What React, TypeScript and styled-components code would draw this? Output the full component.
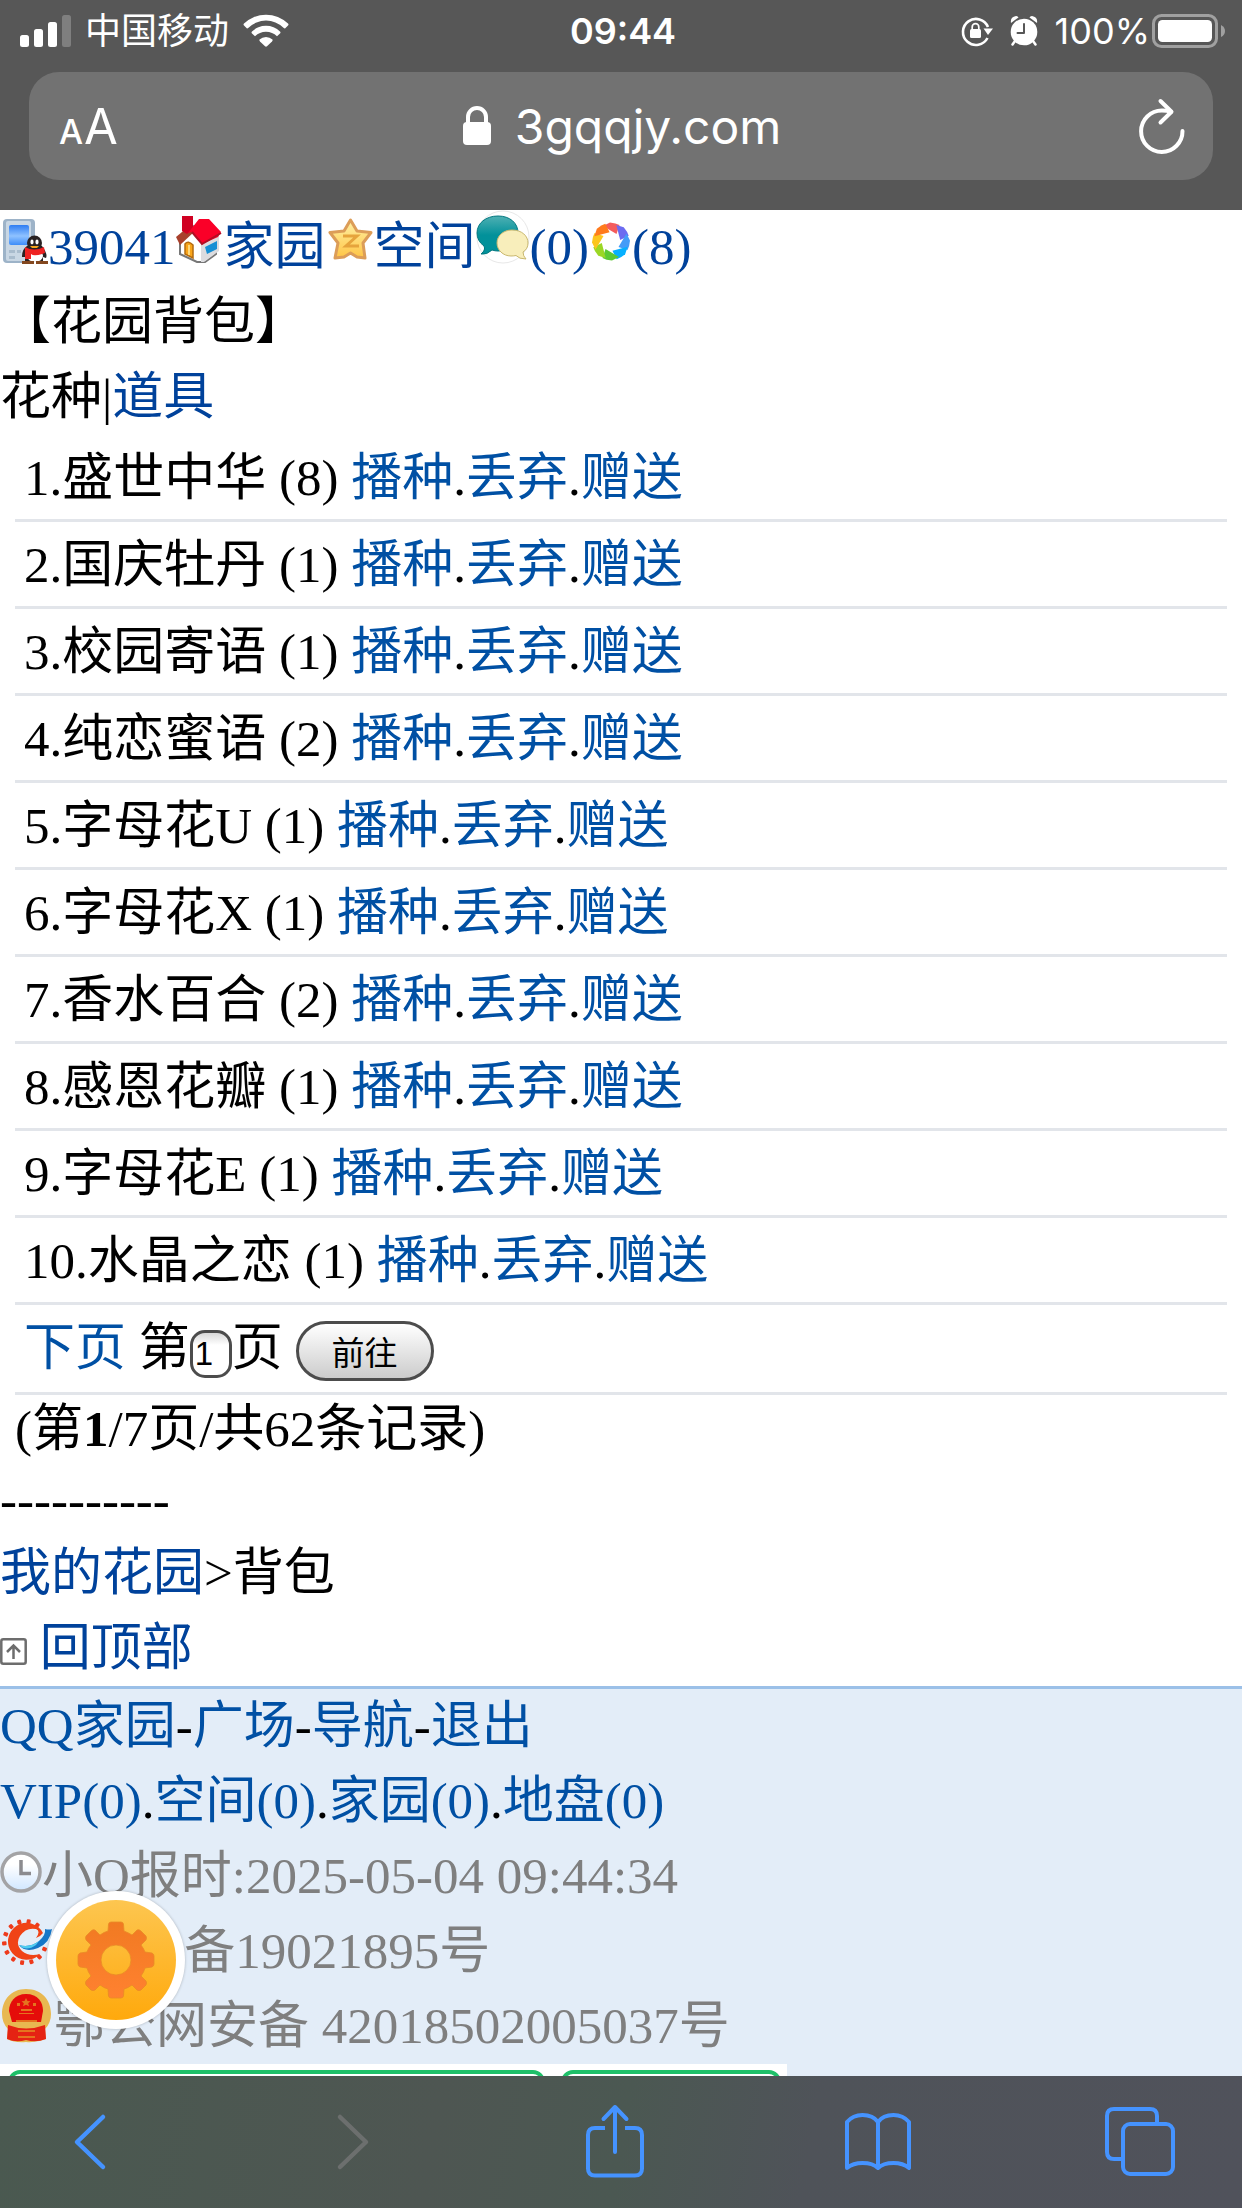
import React, { useState } from "react";
import styled, { createGlobalStyle } from "styled-components";

const GlobalStyle = createGlobalStyle`
  * { box-sizing: border-box; }
  html, body { margin: 0; background: #ffffff; }
  body {
    font-family: "Liberation Serif", "Noto Sans CJK SC", serif;
    font-size: 51px;
    line-height: 75px;
    color: #000000;
  }
  ul { list-style: none; margin: 0; padding: 0; }
  button { margin: 0; font: inherit; color: inherit; cursor: pointer; }
`;

const sans = `Inter, "Noto Sans CJK SC", sans-serif`;

const Screen = styled.div`
  display: flex;
  flex-direction: column;
  height: 100vh;
  overflow: hidden;
`;

/* ---------- browser chrome ---------- */

const TopChrome = styled.header`
  flex: none;
  padding: 0 29px 30px;
  background: #575757;
  color: #ffffff;
  font-family: ${sans};
`;

const StatusBar = styled.div`
  display: grid;
  grid-template-columns: 1fr auto 1fr;
  align-items: center;
  height: 72px;
  margin: 0 -13px 0 -9px;
  padding-bottom: 11px;
  font-size: 36px;
  line-height: 42px;
`;

const StatusGroup = styled.div<{ $end?: boolean; $gap: number }>`
  display: flex;
  align-items: center;
  justify-content: ${(p) => (p.$end ? "flex-end" : "flex-start")};
  gap: ${(p) => p.$gap}px;
`;

const Clock = styled.time`
  font-weight: 600;
`;

const BatteryGroup = styled.span`
  display: flex;
  align-items: center;
  gap: 2px;
`;

const AddressBar = styled.div`
  display: grid;
  grid-template-columns: 1fr auto 1fr;
  align-items: center;
  height: 108px;
  padding: 0 28px 0 30px;
  border-radius: 30px;
  background: #727272;
`;

const ChromeButton = styled.button<{ $end?: boolean }>`
  display: flex;
  align-items: center;
  justify-self: ${(p) => (p.$end ? "end" : "start")};
  gap: 24px;
  padding: 0;
  border: 0;
  background: none;
  line-height: 60px;
`;

const TextSize = styled.span`
  display: flex;
  align-items: baseline;
  gap: 1px;
  padding-top: 6px;
  font-size: 49px;
  font-weight: 400;
`;

const SmallLetter = styled.span`
  font-size: 34px;
  font-weight: 500;
`;

const Address = styled.span`
  padding-top: 2px;
  font-size: 48px;
`;

const Toolbar = styled.nav`
  flex: none;
  display: flex;
  justify-content: space-between;
  align-items: center;
  height: 132px;
  padding: 0 52px 0 40px;
  background: linear-gradient(100deg, #4a5950 0%, #4e5652 35%, #4b5852 50%, #4f5359 65%, #50525b 100%);
`;

const ToolButton = styled.button`
  display: flex;
  justify-content: center;
  width: 100px;
  padding: 0;
  border: 0;
  background: none;
  color: #4593ff;
  &:disabled { color: #6c6f6e; cursor: default; }
`;

/* ---------- page ---------- */

const Page = styled.main`
  flex: 1;
  min-height: 0;
  display: flex;
  flex-direction: column;
  overflow: hidden;
`;

const Line = styled.div`
  white-space: nowrap;
`;

const Title = styled.h1`
  margin: 0;
  font-size: 51px;
  font-weight: 400;
`;

const Link = styled.a<{ $deep?: boolean }>`
  color: ${(p) => (p.$deep ? "#00429b" : "#0050a4")};
  text-decoration: none;
`;

const Seeds = styled.ul`
  margin: 0 15px;
`;

const Row = styled.li`
  padding: 3px 9px 0;
  border-bottom: 3px solid #e2e5ea;
  line-height: 81px;
  white-space: nowrap;
`;

const Pager = styled.form`
  margin: 0 15px;
  padding: 3px 9px;
  border-bottom: 3px solid #e2e5ea;
  line-height: 81px;
  white-space: nowrap;
`;

const PageField = styled.input`
  width: 42px;
  height: 48px;
  padding: 0 2px;
  border: 3px solid #4c4c4c;
  border-radius: 15px;
  background: linear-gradient(#d8d8d8, #ffffff 12px);
  color: #000000;
  font: 33px "Liberation Sans", "Noto Sans CJK SC", sans-serif;
`;

const GoButton = styled.button`
  height: 60px;
  padding: 0 33px;
  border: 3px solid #4c4c4c;
  border-radius: 30px;
  background: linear-gradient(#ffffff, #cccccc);
  font: 33px "Liberation Sans", "Noto Sans CJK SC", sans-serif;
`;

const Summary = styled.p`
  margin: 0 15px;
  line-height: 69px;
`;

const Dashes = styled.div`
  line-height: 72px;
`;

const Footer = styled.footer`
  flex: 1;
  border-top: 3px solid #9bc0e8;
  background: #e3edf8;
`;

const Muted = styled(Line)`
  color: #7f7f7f;
`;

const Badges = styled.div`
  display: flex;
  gap: 16px;
  width: 787px;
  max-width: 100%;
  padding: 6px 6px 0 8px;
  background: #ffffff;
`;

const Badge = styled.div<{ $grow: number }>`
  flex: ${(p) => p.$grow} 1 0;
  height: 75px;
  border: 4px solid #1fc069;
  border-radius: 12px;
`;

const SettingsButton = styled.button`
  position: fixed;
  left: 47px;
  bottom: 179px;
  width: 138px;
  height: 138px;
  padding: 9px;
  border: 0;
  border-radius: 50%;
  background: #ffffff;
  box-shadow: 0 0 3px rgba(0, 0, 0, 0.25);
`;

const Glyph = styled.svg`
  flex: none;
  overflow: visible;
`;

/* ---------- chrome icons ---------- */

const SignalIcon = () => (
  <Glyph width="51" height="32" viewBox="0 0 51 32" fill="#fff">
    <rect x="0" y="20" width="9" height="12" rx="2.5" />
    <rect x="14" y="14" width="9" height="18" rx="2.5" />
    <rect x="28" y="7" width="9" height="25" rx="2.5" />
    <rect x="42" y="0" width="9" height="32" rx="2.5" fill="#7f7f7f" />
  </Glyph>
);

const WifiIcon = () => (
  <Glyph width="46" height="33" viewBox="0 0 46 33" fill="#fff">
    <path d="M1 9.600 A31.500 31.500 0 0 1 45 9.600 Q46 10.600 45 11.500 L42 14.500 Q41 14.200 40.500 13.700 A25 25 0 0 0 5.500 13.700 Q5 14.200 4 14.500 L1 11.500 Q0 10.600 1 9.600Z" />
    <path d="M9 17.500 A20 20 0 0 1 37 17.500 Q38 18.500 37 19.500 L34 22.300 A15.500 15.500 0 0 0 12 22.300 L9 19.500 Q8 18.500 9 17.500Z" />
    <path d="M16.500 25.500 A9.500 9.500 0 0 1 29.500 25.500 Q30 26.500 29 27.500 L24 32.300 Q23 33.200 22 32.300 L17 27.500 Q16 26.500 16.500 25.500Z" />
  </Glyph>
);

const RotationLockIcon = () => (
  <Glyph width="32" height="30" viewBox="0 0 32 30" fill="none">
    <path d="M26.500 22 A13 13 0 1 1 27 11" stroke="#fff" strokeWidth="2.600" />
    <path d="M22.500 12.500 H32 L27 19Z" fill="#fff" />
    <rect x="9" y="13" width="11" height="9" rx="1.500" fill="#fff" />
    <path d="M11.200 14 V11 A3.300 3.300 0 0 1 17.800 11 V14" stroke="#fff" strokeWidth="1.700" />
  </Glyph>
);

const AlarmIcon = () => (
  <Glyph width="28" height="30" viewBox="0 0 28 30" fill="none">
    <circle cx="14" cy="16" r="13.300" fill="#fff" />
    <path d="M1 7 Q0 1 6 0 Q8 .3 8.500 1.500Z M27 7 Q28 1 22 0 Q20 .3 19.500 1.500Z" fill="#fff" />
    <path d="M5 25 L2.500 28.500 M23 25 L25.500 28.500" stroke="#fff" strokeWidth="2.500" strokeLinecap="round" />
    <path d="M14 8 V17 H7.500" stroke="#575757" strokeWidth="2" strokeLinecap="round" strokeLinejoin="round" />
  </Glyph>
);

const BatteryIcon = () => (
  <Glyph width="74" height="34" viewBox="0 0 74 34" fill="none">
    <rect x="1.500" y="1.500" width="63" height="31" rx="8" stroke="#a0a0a0" strokeWidth="3" />
    <rect x="6" y="6" width="54" height="22" rx="4.500" fill="#fff" />
    <path d="M69 11 Q73 13 73 17 Q73 21 69 23Z" fill="#a0a0a0" />
  </Glyph>
);

const LockIcon = () => (
  <Glyph width="28" height="40" viewBox="0 0 28 40" fill="none">
    <rect x="0" y="16" width="28" height="23" rx="4" fill="#fff" />
    <path d="M5 18 V11 A9 9 0 0 1 23 11 V18" stroke="#fff" strokeWidth="4" />
  </Glyph>
);

const ReloadIcon = () => (
  <Glyph width="46" height="55" viewBox="0 0 46 55" fill="none" stroke="#fff" strokeWidth="4" strokeLinecap="round" strokeLinejoin="round">
    <path d="M43.500 32 A20.700 20.700 0 1 1 23 11.500 Q28 11.500 32 12.800" />
    <path d="M21.500 2 L32.500 12.800 L21.500 23.500" />
  </Glyph>
);

const line = { fill: "none", stroke: "currentColor", strokeWidth: 4, strokeLinecap: "round", strokeLinejoin: "round" } as const;

const BackIcon = () => (
  <Glyph width="32" height="56" viewBox="0 0 32 56" {...line} strokeWidth="4.500"><path d="M29 3 L3 28 L29 53" /></Glyph>
);
const ForwardIcon = () => (
  <Glyph width="32" height="56" viewBox="0 0 32 56" {...line} strokeWidth="4.500"><path d="M3 3 L29 28 L3 53" /></Glyph>
);
const ShareIcon = () => (
  <Glyph width="58" height="74" viewBox="0 0 58 74" {...line}>
    <path d="M19 23 H9 Q2 23 2 30 V63.500 Q2 70.500 9 70.500 H49 Q56 70.500 56 63.500 V30 Q56 23 49 23 H39" strokeLinecap="butt" />
    <path d="M29 47 V2 M17.500 14 L29 2 L40.500 14" />
  </Glyph>
);
const BookIcon = () => (
  <Glyph width="66" height="58" viewBox="0 0 66 58" {...line}>
    <path d="M33 9 V55 M33 9 Q28 2 17.500 2 Q8 2 2 9 V55 Q8 50 17.500 50 Q28 50 33 55 Q38 50 48.500 50 Q58 50 64 55 V9 Q58 2 48.500 2 Q38 2 33 9Z" />
  </Glyph>
);
const TabsIcon = () => (
  <Glyph width="70" height="70" viewBox="0 0 70 70" {...line} strokeLinecap="butt">
    <path d="M17 52 H9 Q2 52 2 45 V9 Q2 2 9 2 H45 Q52 2 52 9 V17" />
    <rect x="18" y="17" width="50" height="50" rx="7" />
  </Glyph>
);

/* ---------- page icons ---------- */

const PhoneIcon = () => (
  <Glyph width="48" height="48" viewBox="0 0 48 48">
    <defs>
      <linearGradient id="scr" x1="0" y1="0" x2="0" y2="1"><stop offset="0" stopColor="#2f7df2" /><stop offset=".55" stopColor="#8fc2ff" /><stop offset="1" stopColor="#3d8cf8" /></linearGradient>
    </defs>
    <rect x="3" y="3" width="32" height="44" rx="4" fill="#9db3c8" />
    <rect x="6" y="5" width="25" height="40" rx="2" fill="#c9d7e4" />
    <rect x="9" y="9" width="20" height="20" rx="2" fill="url(#scr)" />
    <path d="M9 34h6v3H9z M17 34h4v3h-4z M9 40h6v3H9z" fill="#a9bccd" />
    <path d="M22 41 Q22 33 27 30 L42 30 Q48 38 46 42 L43 41 V46 H25 V41Z" fill="#2b2222" />
    <ellipse cx="35" cy="40" rx="8" ry="6" fill="#fff" />
    <circle cx="34.500" cy="27" r="7.500" fill="#292222" />
    <ellipse cx="32" cy="26" rx="1.600" ry="2.400" fill="#fff" /><ellipse cx="37" cy="26" rx="1.600" ry="2.400" fill="#fff" />
    <path d="M30 30h9l-2 2h-5z" fill="#f5a51c" />
    <path d="M25 31 Q34 36 44 31 L45 37 Q34 41 31 38 V43 H25 V36Z" fill="#ef2222" />
    <path d="M22 45h12v3H22z M36 45h12v3H36z" fill="#84481f" />
  </Glyph>
);

const HouseIcon = () => (
  <Glyph width="48" height="48" viewBox="0 0 48 48">
    <path d="M4 24 L18 10 L25 16 L40 25 V38 L29 46 H21 L4 38Z" fill="#fff" stroke="#777" strokeWidth="2" />
    <path d="M25 28 L43 20 V35 L28 46 H25Z" fill="#dcdcdf" />
    <path d="M29 31 L41 25 V33 L31 38Z" fill="#168fd4" />
    <path d="M9 28 Q12 24 17 29 V42 L9 38Z" fill="#f8a51b" stroke="#b46b0e" strokeWidth="1.500" />
    <path d="M13 29V39" stroke="#ffd878" strokeWidth="2" />
    <path d="M0 21 L12 11 L18 16 L4 29Z" fill="#a8402c" />
    <path d="M6 0 H17 V13 L11 18 L6 15Z" fill="#d00022" />
    <path d="M12 17 L23 3 H33 L45 16 L42 21 L26 28 L16 16Z" fill="#fa0028" />
    <path d="M16 16 L26 28 L45 17" fill="none" stroke="#b00d24" strokeWidth="2" />
  </Glyph>
);

const StarIcon = () => (
  <Glyph width="48" height="48" viewBox="0 0 48 48">
    <defs><linearGradient id="star" x1="0" y1="0" x2="0" y2="1"><stop offset="0" stopColor="#fff1a6" /><stop offset="1" stopColor="#ffc545" /></linearGradient></defs>
    <path d="M24.500 4 L31 15 L45 16.500 L37 27 L39 42 L31 41 L24.500 37 L18 41 L9 42 L12 27 L4 16.500 L18 15Z" fill="url(#star)" stroke="#dc9d58" strokeWidth="3" strokeLinejoin="round" />
    <path d="M17 20H31L20 30H33" fill="none" stroke="#e6a43c" strokeWidth="3" />
  </Glyph>
);

const ChatIcon = () => (
  <Glyph width="54" height="54" viewBox="0 0 54 54">
    <defs><linearGradient id="teal" x1="0" y1="0" x2="0" y2="1"><stop offset="0" stopColor="#4fb0b3" /><stop offset=".5" stopColor="#02919a" /><stop offset="1" stopColor="#01919a" /></linearGradient></defs>
    <circle cx="27" cy="27" r="26" fill="#fff" stroke="#e8e8e8" />
    <path d="M22 6 C34 6 42 13 42 23 C42 34 34 41 22 41 Q19 41 16 40 Q11 45 5 44 Q10 40 8 36 Q1 31 1 23 C1 13 10 6 22 6Z" fill="url(#teal)" stroke="#02777f" strokeWidth="1" />
    <path d="M36 20 C46 20 52 26 52 33 Q52 39 47 42 Q47 46 50 49 Q43 49 40 45.500 Q38 46 35 46 C27 46 21 40 21 33 C21 26 27 20 36 20Z" fill="#f8eebb" stroke="#c9b86f" strokeWidth="1" />
  </Glyph>
);

const petals = ["#f45c5c", "#6c6bf0", "#449cf7", "#06b0ff", "#5bc934", "#9bd725", "#fcc51d", "#ff7a1c"];
const PinwheelIcon = () => (
  <Glyph width="43" height="45" viewBox="0 0 43 45">
    <g transform="translate(22 22.500)">
      {petals.map((c, i) => (
        <path key={c} d="M-8 -15.500 L-1 -19 Q5 -18.500 8.500 -16.500 L5.500 -7.500Z" fill={c} transform={`rotate(${i * 45})`} />
      ))}
    </g>
  </Glyph>
);

const TopIcon = () => (
  <Glyph width="27" height="27" viewBox="0 0 27 27" fill="none" stroke="#6d6d6d" strokeWidth="2.500">
    <rect x="1.300" y="1.300" width="24.400" height="24.400" rx="2" />
    <path d="M13.500 21V8 M7 14L13.500 7.500L20 14" />
  </Glyph>
);

const ClockIcon = () => (
  <Glyph width="42" height="42" viewBox="0 0 42 42">
    <defs><linearGradient id="face" x1="0" y1="0" x2="0" y2="1"><stop offset=".3" stopColor="#fff" /><stop offset="1" stopColor="#cfe6ff" /></linearGradient></defs>
    <circle cx="21" cy="21" r="19" fill="url(#face)" stroke="#a3a3a5" strokeWidth="3.500" />
    <path d="M21 9V22.500H31" fill="none" stroke="#8b8b8f" strokeWidth="3.500" />
  </Glyph>
);

const teeth = Array.from({ length: 12 }, (_, i) => 20 + i * 26);
const IcpIcon = () => (
  <Glyph width="54" height="54" viewBox="0 0 54 54">
    <g transform="translate(25 28)">
      {teeth.map((a) => (
        <rect key={a} x="18.500" y="-2" width="4.500" height="4" rx="1" fill="#ee3a1c" transform={`rotate(${a})`} />
      ))}
    </g>
    <path d="M43 19 A18.500 18.500 0 1 0 40 40 Q29 43 22 37 Q15 30 20 22 Q26 13 36 15 Q41 17 36 24 Q41 22 43 19Z" fill="#f04316" />
    <path d="M19 31 Q30 34 39 27 Q46 21 45 15 Q49 16 52 15 Q50 29 38 34 Q25 39 19 31Z" fill="#1577c8" />
    <path d="M19 31 Q30 34 39 27 L36 31 Q26 38 19 31Z" fill="#4fcdf0" />
  </Glyph>
);

const EmblemIcon = () => (
  <Glyph width="54" height="54" viewBox="0 0 54 54">
    <path d="M26 0 C42 0 51 11 51 25 Q51 34 45 40 L46 50 Q36 54 26 53 Q15 54 7 50 L8 40 Q2 34 2 25 C2 11 11 0 26 0Z" fill="#e8b850" />
    <path d="M26 5 C38 5 43 13 43 22 L41 33 H12 L9 22 C9 13 15 5 26 5Z" fill="#e50d0a" />
    <path d="M8 36 Q26 43 45 36 L46 50 Q36 54 26 51 Q16 54 7 50Z" fill="#e52313" />
    <path d="M26 9l1.500 3 3 .3-2.300 2 .8 3-3-1.600-3 1.600.8-3-2.300-2 3-.3z" fill="#e5741f" />
    <path d="M17 14h3v3h-3z M33 14h3v3h-3z M19 24h15v1H19z M21 20h11v2H21z M16 31h21v2H16z M18 41h17v2H18z M18 47h17v2H18z" fill="#e5741f" />
  </Glyph>
);

const GearIcon = () => (
  <Glyph width="120" height="120" viewBox="0 0 120 120">
    <defs>
      <linearGradient id="disc" x1="0" y1="0" x2="0" y2="1"><stop offset="0" stopColor="#fdc650" /><stop offset="1" stopColor="#ffa90c" /></linearGradient>
      <linearGradient id="cog" gradientUnits="userSpaceOnUse" x1="0" y1="-38" x2="0" y2="38"><stop offset="0" stopColor="#f17a22" /><stop offset="1" stopColor="#ff8130" /></linearGradient>
    </defs>
    <circle cx="60" cy="60" r="60" fill="url(#disc)" />
    <g transform="translate(60 60)">
      <path
        fill="url(#cog)"
        fillRule="evenodd"
        stroke="#e98a26"
        strokeWidth=".8"
        d="M-5 -38 H5 Q7 -38 7.500 -36 L8 -29 Q13 -27 16 -25 L21 -30 Q23 -31 25 -29 L30 -24 Q31 -22 30 -20 L25 -15 Q28 -11 29 -8 L36 -7 Q38 -6 38 -4 V4 Q38 6 36 7 L29 8 Q28 12 25 16 L30 21 Q31 23 30 25 L25 30 Q23 31 21 30 L16 25 Q12 28 8 29 L7.500 36 Q7 38 5 38 H-5 Q-7 38 -7.500 36 L-8 29 Q-12 28 -16 25 L-21 30 Q-23 31 -25 30 L-30 25 Q-31 23 -30 21 L-25 16 Q-28 12 -29 8 L-36 7 Q-38 6 -38 4 V-4 Q-38 -6 -36 -7 L-29 -8 Q-28 -12 -25 -15 L-30 -20 Q-31 -22 -30 -24 L-25 -29 Q-23 -31 -21 -30 L-16 -25 Q-12 -28 -8 -29 L-7.500 -36 Q-7 -38 -5 -38Z M0 -15 A15 15 0 1 0 0 15 A15 15 0 1 0 0 -15Z"
      />
    </g>
  </Glyph>
);

/* ---------- data ---------- */

const seeds: [string, number][] = [
  ["盛世中华", 8],
  ["国庆牡丹", 1],
  ["校园寄语", 1],
  ["纯恋蜜语", 2],
  ["字母花U", 1],
  ["字母花X", 1],
  ["香水百合", 2],
  ["感恩花瓣", 1],
  ["字母花E", 1],
  ["水晶之恋", 1],
];

export default function App() {
  const [page, setPage] = useState("1");

  return (
    <Screen>
      <GlobalStyle />
      <TopChrome>
        <StatusBar>
          <StatusGroup $gap={14}>
            <SignalIcon />
            <span>中国移动</span>
            <WifiIcon />
          </StatusGroup>
          <Clock>09:44</Clock>
          <StatusGroup $end $gap={17}>
            <RotationLockIcon />
            <AlarmIcon />
            <BatteryGroup>
              <span>100%</span>
              <BatteryIcon />
            </BatteryGroup>
          </StatusGroup>
        </StatusBar>
        <AddressBar>
          <ChromeButton type="button">
            <TextSize>
              <SmallLetter>A</SmallLetter>A
            </TextSize>
          </ChromeButton>
          <ChromeButton type="button">
            <LockIcon />
            <Address>3gqqjy.com</Address>
          </ChromeButton>
          <ChromeButton type="button" $end aria-label="刷新">
            <ReloadIcon />
          </ChromeButton>
        </AddressBar>
      </TopChrome>

      <Page>
        <Line>
          <Link $deep href="#me"><PhoneIcon />39041</Link>
          <Link $deep href="#home"><HouseIcon />家园</Link>
          <Link $deep href="#space"><StarIcon />空间</Link>
          <Link $deep href="#chat"><ChatIcon />(0)</Link>
          <Link $deep href="#news"><PinwheelIcon />(8)</Link>
        </Line>
        <Title>【花园背包】</Title>
        <Line>
          花种|<Link $deep href="#props">道具</Link>
        </Line>

        <Seeds>
          {seeds.map(([name, count], i) => (
            <Row key={name}>
              {i + 1}.{name} ({count}) <Link href="#sow">播种</Link>.<Link href="#drop">丢弃</Link>.<Link href="#give">赠送</Link>
            </Row>
          ))}
        </Seeds>

        <Pager onSubmit={(e) => e.preventDefault()}>
          <Link href="#next">下页</Link> <label htmlFor="page">第</label>
          <PageField id="page" value={page} onChange={(e) => setPage(e.target.value)} />页{" "}
          <GoButton type="submit">前往</GoButton>
        </Pager>
        <Summary>
          (第<b>1</b>/7页/共62条记录)
        </Summary>
        <Dashes>----------</Dashes>
        <Line>
          <Link $deep href="#garden">我的花园</Link>&gt;背包
        </Line>
        <Line>
          <TopIcon /> <Link $deep href="#top">回顶部</Link>
        </Line>

        <Footer>
          <Line>
            <Link href="#qq">QQ家园</Link>-<Link href="#square">广场</Link>-<Link href="#nav">导航</Link>-<Link href="#exit">退出</Link>
          </Line>
          <Line>
            <Link href="#vip">VIP(0)</Link>.<Link href="#s">空间(0)</Link>.<Link href="#h">家园(0)</Link>.<Link href="#d">地盘(0)</Link>
          </Line>
          <Muted><ClockIcon />小Q报时:2025-05-04 09:44:34</Muted>
          <Muted><IcpIcon />鄂ICP备19021895号</Muted>
          <Muted><EmblemIcon />鄂公网安备 42018502005037号</Muted>
          <Badges>
            <Badge $grow={5} />
            <Badge $grow={2} />
          </Badges>
        </Footer>
      </Page>

      <Toolbar>
        <ToolButton type="button" aria-label="后退"><BackIcon /></ToolButton>
        <ToolButton type="button" aria-label="前进" disabled><ForwardIcon /></ToolButton>
        <ToolButton type="button" aria-label="共享"><ShareIcon /></ToolButton>
        <ToolButton type="button" aria-label="书签"><BookIcon /></ToolButton>
        <ToolButton type="button" aria-label="标签页"><TabsIcon /></ToolButton>
      </Toolbar>

      <SettingsButton type="button" aria-label="设置"><GearIcon /></SettingsButton>
    </Screen>
  );
}
